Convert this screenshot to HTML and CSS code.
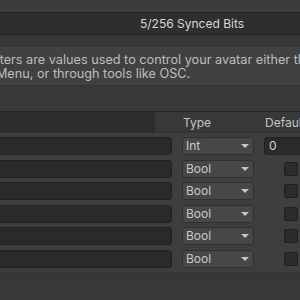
FILE: index.html
```html
<!DOCTYPE html>
<html lang="en">
<head>
    <meta charset="UTF-8">
    <meta name="viewport" content="width=device-width, initial-scale=1.0">
    <title>Expression Parameters</title>
    <link rel="stylesheet" href="styles.css">
</head>
<body>
    <div class="inspector">
        <div class="titlebar"></div>
        <div class="synced">
            <span class="synced-label">5/256 Synced Bits</span>
        </div>

        <!-- help box -->
        <div class="helpbox">
            Parameters are values used to control your avatar either through the<br>
            Action Menu, or through tools like OSC.
        </div>

        <!-- parameter list -->
        <div class="list-header">
            <div class="header-name"></div>
            <div class="header-cell">Type</div>
            <div class="header-cell">Default</div>
            <div class="header-cell">Saved</div>
            <div class="header-cell">Synced</div>
        </div>
        <div class="list-body">
            <div class="param-row">
                <div class="text-field"></div>
                <div class="dropdown">Int</div>
                <div class="text-field value">0</div>
                <div class="checkbox"></div>
                <div class="checkbox"></div>
            </div>
            <div class="param-row">
                <div class="text-field"></div>
                <div class="dropdown">Bool</div>
                <div class="cell-center"><div class="checkbox"></div></div>
                <div class="checkbox"></div>
                <div class="checkbox"></div>
            </div>
            <div class="param-row">
                <div class="text-field"></div>
                <div class="dropdown">Bool</div>
                <div class="cell-center"><div class="checkbox"></div></div>
                <div class="checkbox"></div>
                <div class="checkbox"></div>
            </div>
            <div class="param-row">
                <div class="text-field"></div>
                <div class="dropdown">Bool</div>
                <div class="cell-center"><div class="checkbox"></div></div>
                <div class="checkbox"></div>
                <div class="checkbox"></div>
            </div>
            <div class="param-row">
                <div class="text-field"></div>
                <div class="dropdown">Bool</div>
                <div class="cell-center"><div class="checkbox"></div></div>
                <div class="checkbox"></div>
                <div class="checkbox"></div>
            </div>
            <div class="param-row">
                <div class="text-field"></div>
                <div class="dropdown">Bool</div>
                <div class="cell-center"><div class="checkbox"></div></div>
                <div class="checkbox"></div>
                <div class="checkbox"></div>
            </div>
        </div>
    </div>
</body>
</html>
```

FILE: styles.css
```css
html, body {
    margin: 0;
    padding: 0;
    width: 300px;
    height: 300px;
    overflow: hidden;
    background: #383838;
    font-family: Inter, "Noto Sans", sans-serif;
    font-size: 12px;
    color: #c4c4c4;
}

.inspector {
    margin-left: -130px;
    width: 600px;
}

.titlebar {
    height: 12px;
    background: #3c3c3c;
    border-bottom: 1px solid #232323;
}

.synced {
    height: 21px;
    background: #2e2e2e;
    border-bottom: 1px solid #232323;
    display: flex;
    align-items: center;
    justify-content: center;
    padding-left: 44px;
}

.synced-label {
    color: #d6d6d6;
}

.helpbox {
    margin: 11px 0 0 75px;
    height: 40px;
    box-sizing: border-box;
    padding: 6px 8px 0;
    background: #414141;
    border: 1px solid #353535;
    border-radius: 3px;
    font-size: 12.7px;
    line-height: 14px;
    color: #bdbdbd;
    white-space: nowrap;
}

.list-header,
.param-row {
    display: grid;
    grid-template-columns: 282px 72px 54px 40px 40px;
    column-gap: 10px;
    padding-left: 20px;
}

.list-header {
    margin-top: 25px;
    height: 20px;
    border-top: 1px solid #252525;
    align-items: center;
}

.header-name {
    height: 20px;
    width: 265px;
    background: #2c2c2c;
}

.header-cell {
    padding-left: 1px;
    color: #c4c4c4;
}

.list-body {
    background: #3e3e3e;
    border-top: 1px solid #333;
    border-bottom: 1px solid #333;
    padding: 4px 0 4px;
    display: flex;
    flex-direction: column;
    gap: 4.6px;
}

.param-row {
    height: 18px;
    align-items: center;
}

.text-field {
    height: 18px;
    box-sizing: border-box;
    background: #2a2a2a;
    border: 1px solid #212121;
    border-radius: 3px;
}

.text-field.value {
    padding-left: 4px;
    line-height: 16px;
    color: #d2d2d2;
}

.dropdown {
    height: 18px;
    box-sizing: border-box;
    background: #474747;
    border: 1px solid #2f2f2f;
    border-radius: 3px;
    padding-left: 3px;
    line-height: 16px;
    color: #c8c8c8;
    display: flex;
    justify-content: space-between;
}

.dropdown::after {
    content: "";
    width: 0;
    height: 0;
    margin: 6px 4px 0 0;
    border-left: 4px solid transparent;
    border-right: 4px solid transparent;
    border-top: 4px solid #c4c4c4;
}

.cell-center {
    display: flex;
    justify-content: center;
}

.checkbox {
    width: 14px;
    height: 14px;
    box-sizing: border-box;
    background: #2b2b2b;
    border: 1px solid #1f1f1f;
    border-radius: 2px;
}
```
